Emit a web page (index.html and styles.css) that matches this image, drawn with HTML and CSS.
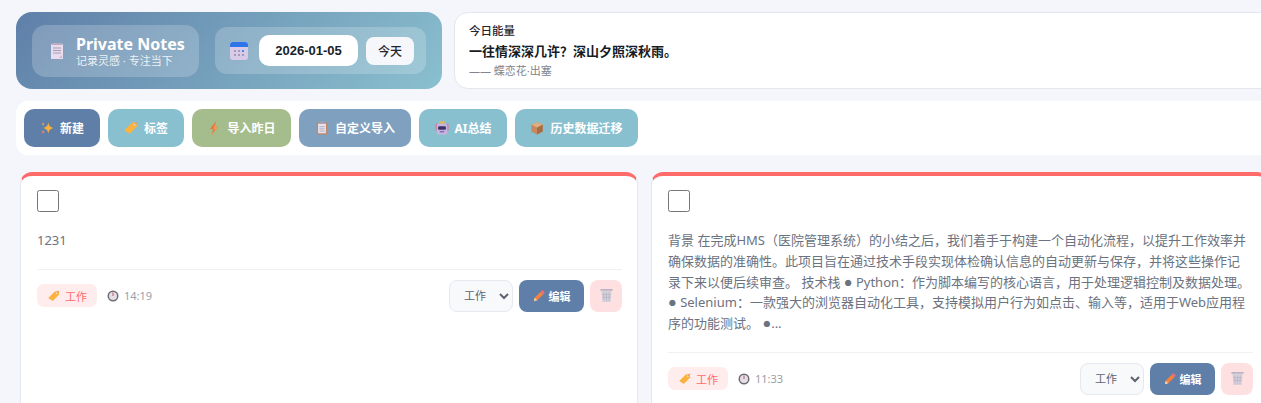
FILE: index.html
```html
<!DOCTYPE html>
<html lang="zh-CN">
<head>
    <meta charset="UTF-8">
    <meta name="viewport" content="width=device-width, initial-scale=1.0">
    <title>Private Notes</title>
    <link rel="stylesheet" href="styles.css">
</head>
<body>
    <svg class="icon-defs" xmlns="http://www.w3.org/2000/svg">
        <symbol id="i-note" viewBox="0 0 12 16">
            <path d="M1 1h10a1 1 0 0 1 1 1v14H0V2a1 1 0 0 1 1-1z" fill="#e8dcee"/>
            <path d="M1 0h10v2H1z" fill="#b9adc0"/>
            <path d="M2 5h8M2 7.500h8M2 10h8" stroke="#a99cb2" stroke-width="1"/>
            <path d="M8 15l3-3v3z" fill="#c9b8d2"/>
        </symbol>
        <symbol id="i-cal" viewBox="0 0 18 18">
            <rect x="0" y="0" width="18" height="18" rx="3" fill="#d8cbe8"/>
            <path d="M0 5V3a3 3 0 0 1 3-3h12a3 3 0 0 1 3 3v2z" fill="#2f74e8"/>
            <path d="M4 8h2v2H4zM8 8h2v2H8zM4 12h2v2H4zM8 12h2v2H8zM12 12h2v2h-2z" fill="#a79ab8"/>
            <path d="M12 8h2v2h-2z" fill="#3f8cf0"/>
        </symbol>
        <symbol id="i-spark" viewBox="0 0 16 16">
            <path d="M9.500 1.500c.6 3.800 1.800 5.200 5.500 6.500-3.700 1.300-4.900 2.700-5.500 6.500-.6-3.800-1.800-5.200-5.500-6.500 3.700-1.300 4.900-2.700 5.500-6.500z" fill="#fbb03b"/>
            <path d="M3.500 1c.3 1.500.8 2 2 2.500-1.200.5-1.700 1-2 2.500-.3-1.500-.8-2-2-2.500 1.200-.5 1.700-1 2-2.500z" fill="#f59a4a"/>
            <path d="M3.500 10c.3 1.500.8 2 2 2.500-1.200.5-1.700 1-2 2.500-.3-1.500-.8-2-2-2.500 1.200-.5 1.700-1 2-2.500z" fill="#e8875a"/>
        </symbol>
        <symbol id="i-tag" viewBox="0 0 16 16">
            <path d="M1 10l8-8 5-1 1 5-8 8a1 1 0 0 1-1.400 0L1 11.400A1 1 0 0 1 1 10z" fill="#fbb23f"/>
            <circle cx="11.800" cy="4.200" r="1.200" fill="#f6d9c8"/>
            <path d="M12 4l3-3" stroke="#d98a9a" stroke-width="1"/>
        </symbol>
        <symbol id="i-bolt" viewBox="0 0 16 16">
            <path d="M10.500 0L3.500 9H7l-1.500 7L12.500 6.500H9z" fill="#e9703f"/>
            <path d="M10.500 0L7 9h2l-3.500 7L12.500 6.500H9z" fill="#f59a4a"/>
        </symbol>
        <symbol id="i-clip" viewBox="0 0 16 16">
            <rect x="2" y="1.500" width="12" height="14" rx="1.500" fill="#c08563"/>
            <rect x="3.500" y="3" width="9" height="11" fill="#e8e4ee"/>
            <rect x="5" y="0.500" width="6" height="3" rx="1" fill="#a8a0b0"/>
            <path d="M5 6.500h6M5 9h6M5 11.500h6" stroke="#a8a4b4" stroke-width="1"/>
        </symbol>
        <symbol id="i-robot" viewBox="0 0 16 16">
            <path d="M4.500 0.500h7l-1 2.500h-5z" fill="#f0b64a"/>
            <rect x="0.500" y="3" width="2.500" height="8" rx="1" fill="#d77fa0"/>
            <rect x="13" y="3" width="2.500" height="8" rx="1" fill="#d77fa0"/>
            <rect x="2" y="3" width="12" height="12.500" rx="2.500" fill="#c9b3e0"/>
            <rect x="3.500" y="6" width="9" height="4" rx="1.500" fill="#3d3566"/>
            <rect x="5.500" y="11.500" width="5" height="1.500" fill="#7d6ca8"/>
        </symbol>
        <symbol id="i-box" viewBox="0 0 16 16">
            <path d="M8 1l6.500 3v8L8 15.500 1.500 12V4z" fill="#c68a5c"/>
            <path d="M8 7.500l6.500-3.500v8L8 15.500z" fill="#a86d46"/>
            <path d="M1.500 4L8 1l6.500 3L8 7.500z" fill="#dcae84"/>
        </symbol>
        <symbol id="i-clock" viewBox="0 0 12 12">
            <circle cx="6" cy="6" r="5.500" fill="#6f6b74"/>
            <circle cx="6" cy="6" r="4" fill="#e4dfe6"/>
            <path d="M6 2.500V6" stroke="#c2556d" stroke-width="1"/>
        </symbol>
        <symbol id="i-pencil" viewBox="0 0 14 14">
            <path d="M1 13l1-4 7-7 3 3-7 7z" fill="#f5813f"/>
            <path d="M9 2l1.300-1.300a1 1 0 0 1 1.400 0l1.600 1.600a1 1 0 0 1 0 1.400L12 5z" fill="#ee6a7c"/>
            <path d="M1 13l1-4 3 3z" fill="#f3d3b0"/>
        </symbol>
        <symbol id="i-trash" viewBox="0 0 14 16">
            <path d="M0.500 1h13v2h-13z" fill="#b9b3c3"/>
            <path d="M1.500 3h11L11.500 15h-9z" fill="#d6d1dc"/>
            <path d="M4 4.500l.5 9M7 4.500v9M10 4.500l-.5 9M2.500 7h9M2.500 10h9" stroke="#b4aebd" stroke-width="0.700"/>
        </symbol>
    </svg>

    <div class="app">
        <div class="top-row">
            <header class="hero">
                <div class="brand">
                    <svg class="brand-icon"><use href="#i-note"/></svg>
                    <div>
                        <div class="brand-title">Private Notes</div>
                        <div class="brand-sub">记录灵感 · 专注当下</div>
                    </div>
                </div>
                <div class="date-box">
                    <svg class="date-icon"><use href="#i-cal"/></svg>
                    <div class="date-value">2026-01-05</div>
                    <button class="today-btn">今天</button>
                </div>
            </header>
            <section class="quote">
                <div class="quote-label">今日能量</div>
                <div class="quote-text">一往情深深几许？深山夕照深秋雨。</div>
                <div class="quote-from">—— 蝶恋花·出塞</div>
            </section>
        </div>

        <nav class="toolbar">
            <button class="tool tool-primary"><svg class="tool-icon"><use href="#i-spark"/></svg>新建</button>
            <button class="tool tool-teal"><svg class="tool-icon"><use href="#i-tag"/></svg>标签</button>
            <button class="tool tool-green"><svg class="tool-icon"><use href="#i-bolt"/></svg>导入昨日</button>
            <button class="tool tool-slate"><svg class="tool-icon"><use href="#i-clip"/></svg>自定义导入</button>
            <button class="tool tool-teal"><svg class="tool-icon"><use href="#i-robot"/></svg>AI总结</button>
            <button class="tool tool-teal"><svg class="tool-icon"><use href="#i-box"/></svg>历史数据迁移</button>
        </nav>

        <main class="notes">
            <article class="note">
                <div class="check"></div>
                <p class="note-text">1231</p>
                <div class="note-foot">
                    <span class="tag"><svg class="tag-icon"><use href="#i-tag"/></svg>工作</span>
                    <span class="time"><svg class="clock"><use href="#i-clock"/></svg>14:19</span>
                    <div class="actions">
                        <select class="cat"><option>工作</option></select>
                        <button class="edit"><svg class="edit-icon"><use href="#i-pencil"/></svg>编辑</button>
                        <button class="del"><svg class="del-icon"><use href="#i-trash"/></svg></button>
                    </div>
                </div>
            </article>
            <article class="note">
                <div class="check"></div>
                <p class="note-text">背景 在完成HMS（医院管理系统）的小结之后，我们着手于构建一个自动化流程，以提升工作效率并确保数据的准确性。此项目旨在通过技术手段实现体检确认信息的自动更新与保存，并将这些操作记录下来以便后续审查。 技术栈 <span class="dot">●</span> Python：作为脚本编写的核心语言，用于处理逻辑控制及数据处理。 <span class="dot">●</span> Selenium：一款强大的浏览器自动化工具，支持模拟用户行为如点击、输入等，适用于Web应用程序的功能测试。 <span class="dot">●</span>...</p>
                <div class="note-foot">
                    <span class="tag"><svg class="tag-icon"><use href="#i-tag"/></svg>工作</span>
                    <span class="time"><svg class="clock"><use href="#i-clock"/></svg>11:33</span>
                    <div class="actions">
                        <select class="cat"><option>工作</option></select>
                        <button class="edit"><svg class="edit-icon"><use href="#i-pencil"/></svg>编辑</button>
                        <button class="del"><svg class="del-icon"><use href="#i-trash"/></svg></button>
                    </div>
                </div>
            </article>
        </main>
    </div>
</body>
</html>
```

FILE: styles.css
```css
* {
    box-sizing: border-box;
}

html, body {
    height: 403px;
    overflow: hidden;
}

body {
    margin: 0;
    background-color: #f5f6fb;
    font-family: "Noto Sans", "Noto Sans CJK SC", sans-serif;
    color: #1f2430;
}

button, select {
    font-family: inherit;
}

.icon-defs {
    display: none;
}

.app {
    width: 1290px;
    height: 403px;
    overflow: hidden;
    padding: 12px 16px 0;
}

.top-row {
    display: flex;
    gap: 12px;
}

.hero {
    width: 426px;
    height: 77px;
    flex: none;
    display: flex;
    align-items: center;
    gap: 16px;
    padding: 0 16px;
    border-radius: 16px;
    background: linear-gradient(135deg, #5f7fa8, #8ac0cf);
}

.brand {
    width: 167px;
    height: 52px;
    display: flex;
    align-items: center;
    gap: 13px;
    padding-left: 19px;
    border-radius: 14px;
    background: rgba(255, 255, 255, 0.2);
    color: #fff;
}

.brand-icon {
    width: 12px;
    height: 16px;
    flex: none;
}

.brand-title {
    font-size: 16px;
    font-weight: 700;
    line-height: 20px;
}

.brand-sub {
    font-size: 11px;
    line-height: 13px;
    opacity: 0.85;
}

.date-box {
    width: 211px;
    height: 47px;
    display: flex;
    align-items: center;
    padding-left: 15px;
    border-radius: 12px;
    background: rgba(255, 255, 255, 0.2);
}

.date-icon {
    width: 18px;
    height: 18px;
    flex: none;
    margin-right: 11px;
}

.date-value {
    width: 99px;
    height: 31px;
    margin-right: 8px;
    border-radius: 10px;
    background: #fff;
    font-family: "Liberation Sans", sans-serif;
    font-size: 13px;
    font-weight: 700;
    line-height: 31px;
    text-align: center;
    color: #1a1f2b;
}

.today-btn {
    width: 48px;
    height: 28px;
    padding: 0;
    border: none;
    border-radius: 8px;
    background: #f5f7fa;
    font-size: 12px;
    font-weight: 500;
    color: #1f2430;
}

.quote {
    flex: 1;
    height: 77px;
    padding: 10px 14px;
    border: 1px solid #e4e6ee;
    border-radius: 14px;
    background: #fff;
}

.quote-label {
    font-size: 11.500px;
    font-weight: 500;
    line-height: 16px;
    color: #1f2430;
}

.quote-text {
    margin-top: 2px;
    font-size: 13px;
    font-weight: 700;
    line-height: 20px;
    color: #151a25;
}

.quote-from {
    margin-top: 3px;
    font-size: 11px;
    line-height: 14px;
    color: #80858f;
}

.toolbar {
    display: grid;
    grid-template-columns: 76px 76px 99px 112px 88px 123px;
    gap: 8px;
    height: 54px;
    margin-top: 12px;
    padding: 8px;
    border-radius: 12px;
    background: #fff;
}

.tool {
    display: flex;
    align-items: center;
    justify-content: center;
    gap: 6px;
    height: 38px;
    padding: 0;
    border: none;
    border-radius: 10px;
    font-size: 12px;
    font-weight: 700;
    color: #fff;
}

.tool-icon {
    width: 14px;
    height: 14px;
    flex: none;
}

.tool-primary {
    background: #5f7fa8;
}

.tool-teal {
    background: #89c0cf;
}

.tool-green {
    background: #a5bc8c;
}

.tool-slate {
    background: #7fa0bf;
}

.notes {
    display: grid;
    grid-template-columns: 618px 618px;
    gap: 13px;
    margin-top: 17px;
    padding-left: 4px;
}

.note {
    display: flex;
    flex-direction: column;
    height: 260px;
    padding: 14px 15px 14px 16px;
    border: 1px solid #e6e8ef;
    border-top: 4px solid #ff6b6b;
    border-radius: 12px;
    background: #fff;
}

.check {
    width: 22px;
    height: 22px;
    flex: none;
    border: 1px solid #767676;
    border-radius: 2.500px;
    background: #fff;
}

.note-text {
    margin: 18px 0 0;
    padding: 0 2px 18px 0;
    font-size: 13px;
    line-height: 20.800px;
    color: #6b7280;
    border-bottom: 1px solid #f0f1f5;
}

.dot {
    font-family: "Liberation Sans", sans-serif;
    font-size: 14.500px;
    line-height: 1;
}

.note-foot {
    display: flex;
    align-items: center;
    margin-top: 10px;
}

.tag {
    display: flex;
    align-items: center;
    gap: 5px;
    height: 23px;
    padding: 0 10px 0 11px;
    border-radius: 7px;
    background: #ffecec;
    font-size: 11px;
    color: #ff6b6b;
}

.tag-icon {
    width: 12px;
    height: 12px;
}

.time {
    display: flex;
    align-items: center;
    gap: 5px;
    margin-left: 10px;
    font-size: 11px;
    color: #9aa0ab;
}

.clock {
    width: 12px;
    height: 12px;
}

.actions {
    display: flex;
    align-items: center;
    gap: 6px;
    margin-left: auto;
}

.cat {
    width: 64px;
    height: 32px;
    padding: 0 4px 0 10px;
    border: 1px solid #e6e8ef;
    border-radius: 8px;
    background-color: #f8f9fb;
    font-size: 11px;
    color: #5c6370;
}

.edit {
    display: flex;
    align-items: center;
    justify-content: center;
    gap: 4px;
    width: 65px;
    height: 32px;
    padding: 0;
    border: none;
    border-radius: 8px;
    background: #5f7fa8;
    font-size: 11px;
    font-weight: 700;
    color: #fff;
}

.edit-icon {
    width: 12px;
    height: 12px;
}

.del {
    display: flex;
    align-items: center;
    justify-content: center;
    width: 32px;
    height: 32px;
    padding: 0;
    border: none;
    border-radius: 8px;
    background: #ffe0e0;
}

.del-icon {
    width: 13px;
    height: 15px;
}
```
